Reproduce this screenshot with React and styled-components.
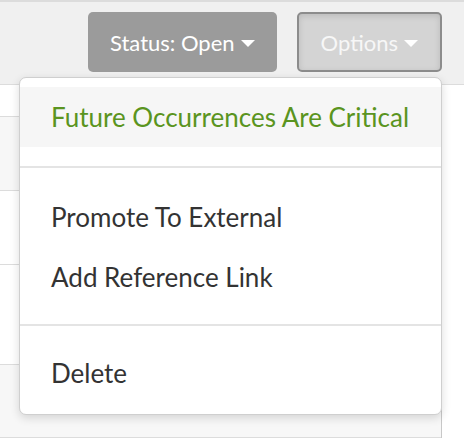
import styled, { createGlobalStyle } from "styled-components";

const GlobalStyle = createGlobalStyle`
  html, body {
    margin: 0;
    padding: 0;
    background: #fff;
    font-family: Lato, "Open Sans", sans-serif;
  }
`;

const Page = styled.div`
  position: relative;
  width: 464px;
  height: 440px;
  overflow: hidden;
  background: #fff;
`;

const Header = styled.div`
  display: flex;
  justify-content: flex-end;
  align-items: flex-start;
  gap: 20px;
  box-sizing: border-box;
  height: 85px;
  padding: 10px 22px 0 0;
  background: #f0f0f0;
  border-top: 2px solid #dcdcdc;
  border-bottom: 1px solid #dcdcdc;
`;

const Button = styled.button`
  display: flex;
  align-items: center;
  gap: 6px;
  box-sizing: border-box;
  height: 60px;
  padding: 0 22px;
  border-radius: 5px;
  font-family: inherit;
  font-size: 22px;
  color: ${(p) => (p.$active ? "#f7f7f7" : "#fff")};
  background: ${(p) => (p.$active ? "#d4d4d4" : "#9b9b9b")};
  border: ${(p) => (p.$active ? "2px solid #8c8c8c" : "none")};
  box-shadow: ${(p) => (p.$active ? "inset 0 2px 6px rgba(0,0,0,0.12)" : "none")};
  cursor: pointer;
`;

const Caret = styled.span`
  width: 0;
  height: 0;
  border-left: 7px solid transparent;
  border-right: 7px solid transparent;
  border-top: 7px solid #fff;
  margin-top: 2px;
`;

const Table = styled.div`
  width: 442px;
  box-sizing: border-box;
  border-right: 1px solid #c8c8c8;
`;

const Row = styled.div`
  box-sizing: border-box;
  height: ${(p) => p.$h}px;
  background: ${(p) => (p.$shade ? "#f7f7f7" : "#fff")};
  border-bottom: 1px solid #dcdcdc;
`;

const Menu = styled.ul`
  position: absolute;
  top: 77px;
  left: 19px;
  width: 423px;
  box-sizing: border-box;
  margin: 0;
  padding: 9px 0 11px;
  list-style: none;
  background: #fff;
  border: 1px solid #cfcfcf;
  border-radius: 7px;
  box-shadow: 0 3px 10px rgba(0, 0, 0, 0.14);
`;

const Item = styled.li`
  display: flex;
  align-items: center;
  height: 60px;
  padding-left: 31px;
  font-size: 26px;
  color: ${(p) => (p.$highlight ? "#5a9420" : "#333")};
  background: ${(p) => (p.$highlight ? "#f6f6f6" : "transparent")};
  white-space: nowrap;
`;

const Divider = styled.li`
  height: 2px;
  margin: ${(p) => p.$gap}px 0;
  background: #e4e4e4;
`;

export default function App() {
  return (
    <Page>
      <GlobalStyle />
      <Header>
        <Button>
          Status: Open <Caret />
        </Button>
        <Button $active>
          Options <Caret />
        </Button>
      </Header>
      <Table>
        <Row $h={32} />
        <Row $h={74} $shade />
        <Row $h={74} />
        <Row $h={100} />
        <Row $h={73} $shade />
      </Table>
      <Menu>
        <Item $highlight>Future Occurrences Are Critical</Item>
        <Divider $gap={19} />
        <Item>Promote To External</Item>
        <Item>Add Reference Link</Item>
        <Divider $gap={17} />
        <Item>Delete</Item>
      </Menu>
    </Page>
  );
}
